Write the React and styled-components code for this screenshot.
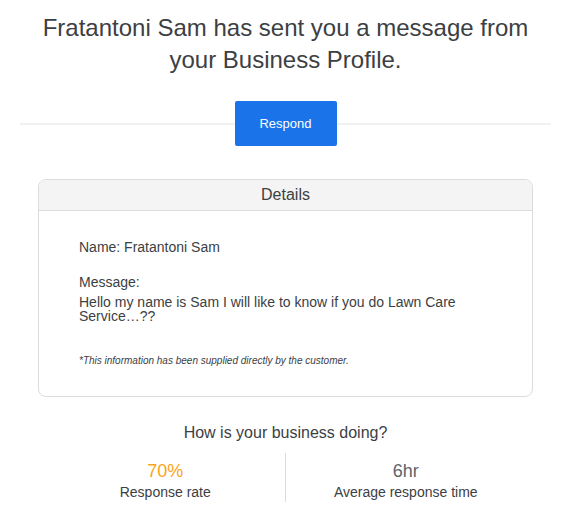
import React from "react";
import styled, { createGlobalStyle } from "styled-components";

const Global = createGlobalStyle`
  html, body { margin: 0; padding: 0; background: #fff; }
  body { font-family: "Liberation Sans", Arial, sans-serif; color: #3c4043; }
`;

const Page = styled.div`
  width: 571px;
  padding-top: 12px;
`;

const Headline = styled.h1`
  margin: 0;
  padding: 0 30px;
  font-size: 24px;
  line-height: 32px;
  font-weight: 400;
  text-align: center;
  color: #3c4043;
`;

const ButtonRow = styled.div`
  display: flex;
  align-items: center;
  margin: 25px 20px 0;
`;

const Rule = styled.div`
  flex: 1;
  height: 2px;
  background: #f1f1f1;
`;

const RespondButton = styled.a`
  display: flex;
  align-items: center;
  justify-content: center;
  width: 102px;
  height: 45px;
  background: #1a73e8;
  color: #fff;
  font-size: 13px;
  border-radius: 2px;
  text-decoration: none;
`;

const Card = styled.div`
  margin: 33px 38px 0;
  border: 1px solid #dadce0;
  border-radius: 8px;
  overflow: hidden;
`;

const CardHeader = styled.div`
  height: 30px;
  line-height: 30px;
  background: #f4f4f4;
  border-bottom: 1px solid #dadce0;
  text-align: center;
  font-size: 16px;
  color: #3c4043;
`;

const CardBody = styled.div`
  padding: 28px 40px 29px;
  font-size: 14px;
  color: #3c4043;
`;

const Field = styled.div`
  line-height: 16px;
  margin-bottom: ${(p) => p.$gap || 0}px;
`;

const MessageText = styled.div`
  line-height: 14px;
  margin-top: 5px;
`;

const Note = styled.div`
  margin-top: 32px;
  font-size: 10px;
  font-style: italic;
  line-height: 12px;
  color: #3c4043;
`;

const Question = styled.div`
  margin-top: 26px;
  text-align: center;
  font-size: 16px;
  line-height: 20px;
  color: #3c4043;
`;

const Stats = styled.div`
  display: grid;
  grid-template-columns: 1fr 1px 1fr;
  width: 480px;
  margin: 10px auto 0;
`;

const Divider = styled.div`
  background: #dadce0;
`;

const Stat = styled.div`
  display: flex;
  flex-direction: column;
  align-items: center;
  padding: 7px 0 1px;
`;

const StatValue = styled.div`
  font-size: 18px;
  line-height: 22px;
  color: ${(p) => p.$color};
`;

const StatLabel = styled.div`
  margin-top: 1px;
  font-size: 14px;
  line-height: 18px;
  color: #3c4043;
`;

export default function App() {
  return (
    <>
      <Global />
      <Page>
        <Headline>
          Fratantoni Sam has sent you a message from your Business Profile.
        </Headline>
        <ButtonRow>
          <Rule />
          <RespondButton href="#">Respond</RespondButton>
          <Rule />
        </ButtonRow>
        <Card>
          <CardHeader>Details</CardHeader>
          <CardBody>
            <Field $gap={19}>Name: Fratantoni Sam</Field>
            <Field>Message:</Field>
            <MessageText>
              Hello my name is Sam I will like to know if you do Lawn Care Service…??
            </MessageText>
            <Note>*This information has been supplied directly by the customer.</Note>
          </CardBody>
        </Card>
        <Question>How is your business doing?</Question>
        <Stats>
          <Stat>
            <StatValue $color="#f9a51a">70%</StatValue>
            <StatLabel>Response rate</StatLabel>
          </Stat>
          <Divider />
          <Stat>
            <StatValue $color="#5f6368">6hr</StatValue>
            <StatLabel>Average response time</StatLabel>
          </Stat>
        </Stats>
      </Page>
    </>
  );
}
